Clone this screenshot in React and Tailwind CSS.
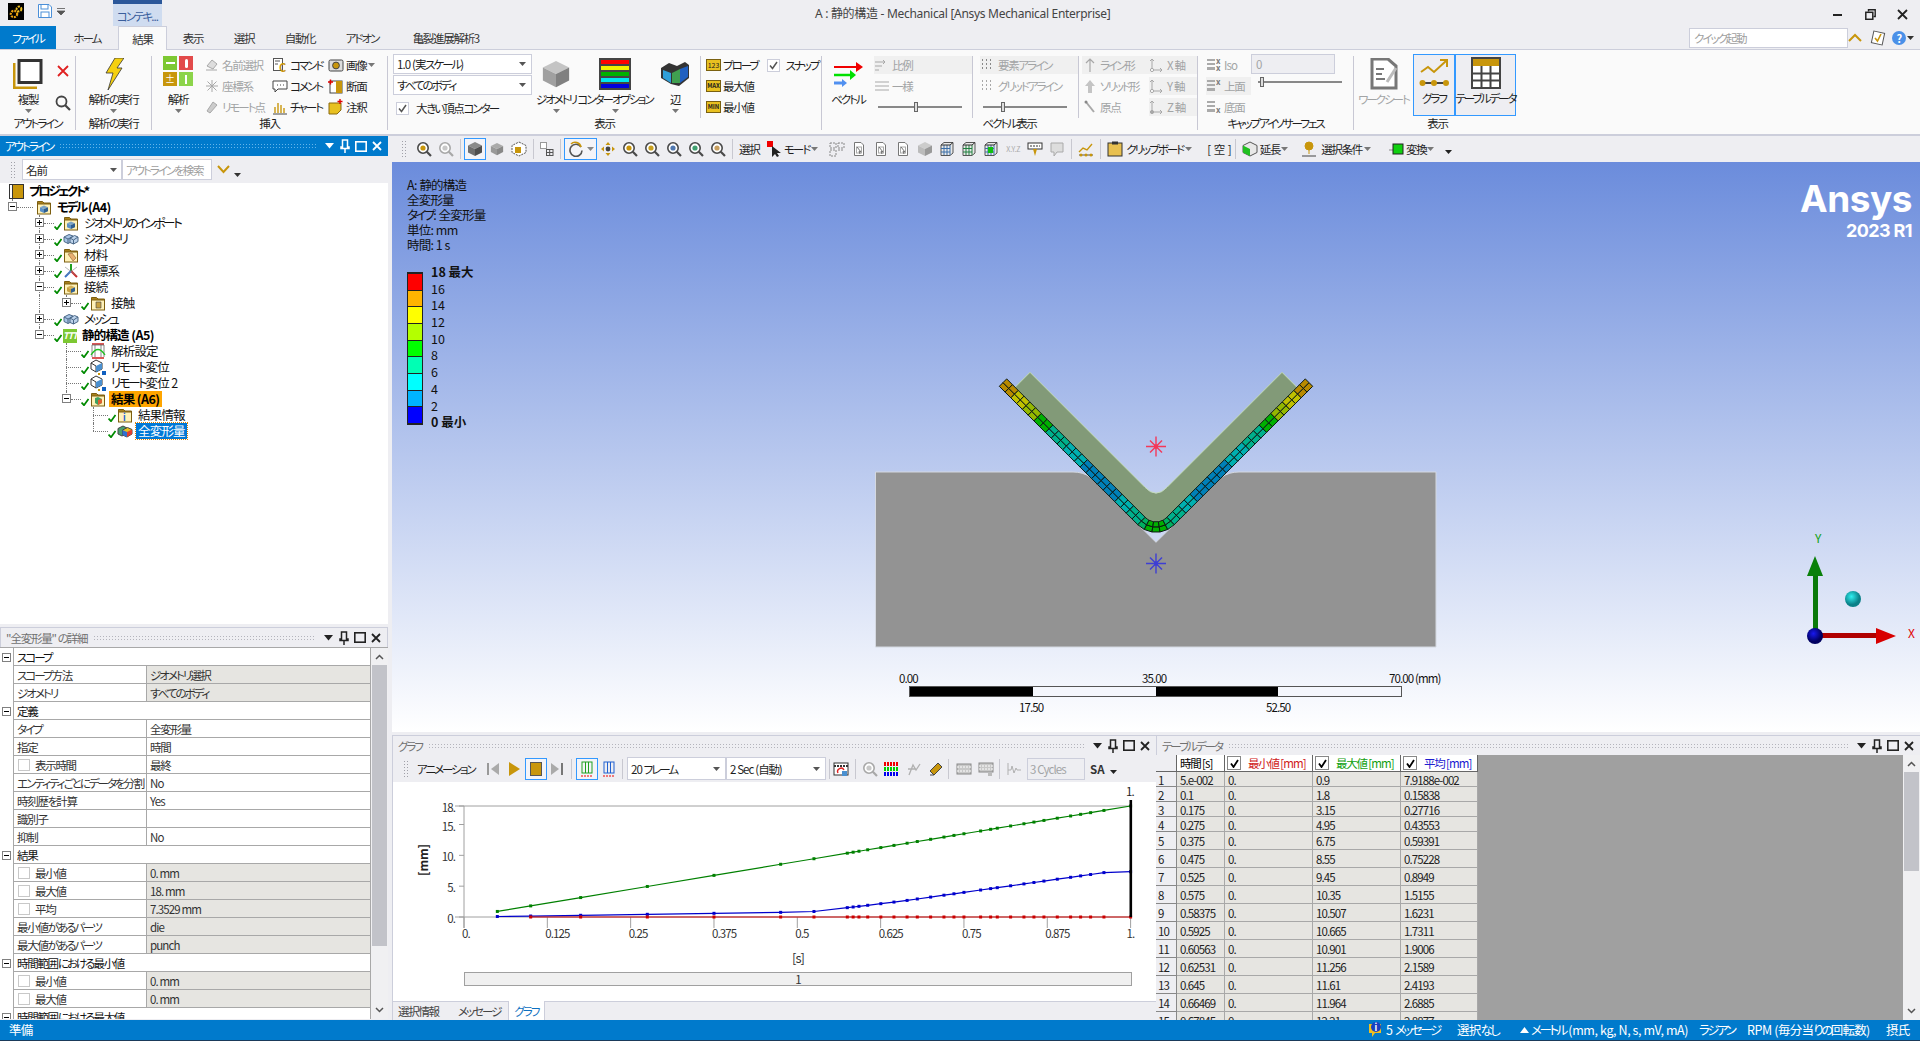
import React from 'react';

const GOLD = '#c8960c';

// Meiryo UI runs much narrower than Noto Sans CJK, so kana and kanji get their own tracking
const K = ({ children, big }) => {
  if (typeof children !== 'string') return children;
  return children.split(/([ぁ-んァ-ヶー]+|[一-龥]+)/).map((s, i) => {
    if (!s) return null;
    if (/[ぁ-んァ-ヶー]/.test(s[0])) return <span key={i} className={big ? 'tracking-[-2.4px]' : 'tracking-[-2px]'}>{s}</span>;
    if (/[一-龥]/.test(s[0])) return <span key={i} className={big ? 'tracking-[-0.8px]' : 'tracking-[-1.3px]'}>{s}</span>;
    return <span key={i}>{s}</span>;
  });
};

const Svg = ({ w = 16, h = 16, vb, children, className = '' }) => (
  <svg width={w} height={h} viewBox={vb || `0 0 ${w} ${h}`} className={`shrink-0 tracking-normal ${className}`}>{children}</svg>
);

// ---------- small icons ----------
const Mag = ({ c = GOLD, dim }) => (
  <Svg>
    <circle cx="7" cy="7" r="5.2" fill="#fff" stroke={dim ? '#a8a8a8' : '#4a4a4a'} strokeWidth="1.6" />
    <circle cx="7" cy="7" r="2.6" fill={dim ? '#c8c8c8' : c} />
    <path d="M10.8 10.8L15 15" stroke={dim ? '#a8a8a8' : '#4a4a4a'} strokeWidth="2.2" />
  </Svg>
);
const Cube = ({ top = '#8a8a8a', left = '#6e6e6e', right = '#4e4e4e', size = 16 }) => (
  <Svg w={size} h={size} vb="0 0 16 16">
    <path d="M8 1L15 4.5L8 8L1 4.5Z" fill={top} />
    <path d="M1 4.5L8 8V15L1 11.5Z" fill={left} />
    <path d="M15 4.5L8 8V15L15 11.5Z" fill={right} />
  </Svg>
);
const Page = ({ mark = '#707070' }) => (
  <Svg>
    <path d="M3.5 1.5H10L12.5 4V14.5H3.5Z" fill="#fff" stroke="#777" />
    <rect x="5.5" y="6" width="5" height="6" fill="none" stroke="#aaa" />
    <path d="M6 6L10 11L8 10.5L9 13" stroke={mark} fill="none" />
  </Svg>
);
const GridBox = ({ c = '#3a6ea8', dot }) => (
  <Svg>
    <path d="M2 4L5 1.5H14V12L11 14.5H2Z" fill="#e8e8e8" stroke="#555" />
    <path d="M5 4V14M8 4V14M2 7.5H11M2 11H11M11 4V14" stroke={c} strokeWidth="1" />
    <path d="M2 4H11L14 1.5" stroke="#333" fill="none" />
    {dot && <rect x="5" y="6" width="5" height="6" fill={dot} />}
  </Svg>
);
const Chevron = ({ c = GOLD }) => (
  <Svg w={14} h={10}><path d="M1 8L7 2L13 8" fill="none" stroke={c} strokeWidth="2" /></Svg>
);
const Tri = ({ c = '#555', className = '' }) => (
  <Svg w={7} h={4} className={className}><path d="M0 0H7L3.5 4Z" fill={c} /></Svg>
);
const Check = () => (
  <Svg w={8} h={8} className="mt-[6px]"><path d="M0.5 4.5L3 7.2L7.5 1" fill="none" stroke="#008a00" strokeWidth="1.8" /></Svg>
);
const Folder = ({ children }) => (
  <Svg>
    <path d="M1.5 2.5H6.5L8 4H14.5V6H1.5Z" fill="#a8801c" stroke="#7c5e10" />
    <rect x="1.5" y="5" width="13" height="10" fill="#fff1b8" stroke="#7c5e10" />
    {children}
  </Svg>
);
const MiniCube = ({ c = '#5a90c8' }) => (
  <g>
    <path d="M8 6.5L12 8.3L8 10L4 8.3Z" fill={c} opacity="0.8" />
    <path d="M4 8.3L8 10V14L4 12.2Z" fill={c} />
    <path d="M12 8.3L8 10V14L12 12.2Z" fill="#2e5e90" />
  </g>
);
const BlueBoxes = () => (
  <Svg>
    <path d="M1 6L6 3.5L10 5V10L5 12.5L1 10.5Z" fill="#a8c4e4" stroke="#4a6888" />
    <path d="M7 7L11.5 4.5L15 6V10.5L10.5 13L7 11.5Z" fill="#bcd2ea" stroke="#4a6888" />
    <path d="M1 6L5 8V12.5M5 8L10 5.5M7 7L10.5 9V13M10.5 9L15 6" stroke="#4a6888" fill="none" />
  </Svg>
);
const Multi = () => (
  <Svg>
    <path d="M1 5.5L6 3L10 5V10.5L5 13L1 11Z" fill="#48a070" stroke="#444" />
    <path d="M5.5 7L10.5 4.5L15 6.5V11L10 14L5.5 12Z" fill="#e8c020" stroke="#444" />
    <path d="M5.5 7L10 9V14L5.5 12Z" fill="#3070d0" />
    <path d="M10 9L15 6.5V11L10 14Z" fill="#e04030" />
  </Svg>
);

// ---------- panels ----------
const Dots = ({ light }) => (
  <div className={`flex-1 h-[6px] mx-[6px] bg-[length:3px_3px] ${light ? 'bg-[radial-gradient(#b4b4bc_0.7px,transparent_0.8px)]' : 'bg-[radial-gradient(#63b4ea_0.7px,transparent_0.8px)]'}`} />
);
const PanelHead = ({ title, active, className = '' }) => {
  const c = active ? '#ffffff' : '#222222';
  return (
    <div className={`h-[20px] flex items-center shrink-0 pl-[5px] pr-[6px] ${active ? 'bg-[#007acc] text-white' : 'bg-[#eeeef2] text-[#717171]'} ${className}`}>
      <span className="whitespace-nowrap"><K>{title}</K></span>
      <Dots light={!active} />
      <Svg w={9} h={6} className="ml-[3px]"><path d="M0 0H9L4.5 5.5Z" fill={c} /></Svg>
      <Svg w={10} h={14} className="ml-[6px]"><path d="M2.5 1H7.5V8H9V9.5H1V8H2.5ZM5 9.5V14" fill="none" stroke={c} strokeWidth="1.5" /></Svg>
      <Svg w={12} h={11} className="ml-[5px]"><rect x="0.8" y="0.8" width="10.4" height="9.4" fill="none" stroke={c} strokeWidth="1.6" /></Svg>
      <Svg w={10} h={10} className="ml-[5px]"><path d="M1 1L9 9M9 1L1 9" stroke={c} strokeWidth="1.8" /></Svg>
    </div>
  );
};
const Grip = ({ className = '' }) => (
  <div className={`w-[5px] h-[18px] shrink-0 bg-[length:3px_3px] bg-[radial-gradient(#a0a0a8_0.7px,transparent_0.8px)] ${className}`} />
);

// ---------- title bar + tabs ----------
const TitleBar = () => (
  <div className="h-[26px] flex items-stretch relative shrink-0">
    <div className="ml-[8px] mt-[3px] w-[16px] h-[17px] bg-black flex items-center justify-center">
      <Svg w={14} h={14}>
        <circle cx="5" cy="9" r="3.2" fill="none" stroke="#e8a010" strokeWidth="2.2" strokeDasharray="2 1" />
        <circle cx="10" cy="4" r="2.4" fill="none" stroke="#f0c020" strokeWidth="2" strokeDasharray="2 1" />
      </Svg>
    </div>
    <div className="ml-[14px] mt-[4px]">
      <Svg w={14} h={14}>
        <path d="M0.5 0.5H11L13.5 3V13.5H0.5Z" fill="#fff" stroke="#4b8fd8" />
        <rect x="3" y="0.5" width="7" height="4.5" fill="none" stroke="#4b8fd8" />
        <rect x="3" y="8" width="8" height="5.5" fill="none" stroke="#4b8fd8" />
      </Svg>
    </div>
    <div className="ml-[5px] mt-[8px]">
      <Svg w={8} h={8}><path d="M0 0.5H8M0 3H8L4 7Z" stroke="#555" fill="#555" strokeWidth="0.8" /></Svg>
    </div>
    <div className="ml-[48px] w-[49px] bg-[#cfdcf0] border-t-[4px] border-[#2b579a] text-[#3a5e9c] text-center pt-[5px] whitespace-nowrap"><K>コンテキ...</K></div>
    <div className="absolute left-[815px] top-[6px] text-[#444] text-[12px] whitespace-nowrap font-['Noto_Sans','Noto_Sans_CJK_JP',sans-serif] leading-[16px] tracking-[-0.3px]">A : 静的構造 - Mechanical [Ansys Mechanical Enterprise]</div>
    <div className="ml-auto flex items-center pt-[3px] pr-[12px] gap-[21px]">
      <div className="w-[9px] h-[2px] bg-[#222] mr-[2px]" />
      <Svg w={11} h={11}><path d="M3.5 2.5V0.8H10.2V7.5H8.5" fill="none" stroke="#222" strokeWidth="1.4" /><rect x="0.8" y="3.3" width="7" height="7" fill="none" stroke="#222" strokeWidth="1.5" /></Svg>
      <Svg w={11} h={11}><path d="M1 1L10 10M10 1L1 10" stroke="#222" strokeWidth="1.8" /></Svg>
    </div>
  </div>
);

const tabs = [
  ['ホーム', 'w-[62px]'],
  ['結果', 'w-[49px]'],
  ['表示', 'w-[52px]'],
  ['選択', 'w-[50px]'],
  ['自動化', 'w-[62px]'],
  ['アドオン', 'w-[62px]'],
  ['亀裂進展解析3', 'w-[106px]'],
];
const TabRow = () => (
  <div className="h-[24px] flex items-stretch border-b border-[#cccedb] shrink-0">
    <div className="w-[56px] bg-[#007acc] text-white flex items-center justify-center"><span><K>ファイル</K></span></div>
    {tabs.map(([t, w]) => (
      <div key={t} className={`${w} flex items-center justify-center text-[#333] ${t === '結果' ? 'bg-[#fafafa] border border-b-0 border-[#cccedb] h-[24px]' : ''}`}><span><K>{t}</K></span></div>
    ))}
    <div className="ml-auto flex items-center pr-[6px]">
      <div className="w-[159px] h-[20px] bg-white border border-[#cccedb] pl-[4px] flex items-center text-[#a0a0a0]"><span><K>クイック起動</K></span></div>
      <Chevron />
      <div className="ml-[8px]">
        <Svg><rect x="2.5" y="2" width="11" height="12" fill="#fff" stroke="#555" transform="rotate(12 8 8)" /><path d="M5 8L7.5 11L11 4" fill="none" stroke={GOLD} strokeWidth="1.6" /></Svg>
      </div>
      <div className="ml-[6px] w-[14px] h-[14px] rounded-full bg-[#4a90e8] text-white font-bold text-[11px] flex items-center justify-center">?</div>
      <Tri c="#333" className="ml-[1px]" />
    </div>
  </div>
);

// ---------- ribbon ----------
const Sep = ({ short }) => <div className={`w-px bg-[#c8c8d4] shrink-0 ${short ? 'h-[62px]' : 'h-[74px]'}`} />;
const Group = ({ w, label, children, end = true }) => (
  <>
    <div className={`${w} h-[74px] flex flex-col shrink-0`}>
      <div className="h-[60px] flex">{children}</div>
      <div className="h-[14px] leading-[14px] text-center text-[#1e1e1e] whitespace-nowrap"><K>{label}</K></div>
    </div>
    {end && <Sep />}
  </>
);
const Big = ({ w, icon, label, arrow = true, dis, box }) => (
  <div className={`${w} shrink-0 flex flex-col items-center ${box ? 'border border-[#3399ff] bg-[#eeeef2] h-[62px] -mt-[2px]' : ''}`}>
    <div className="h-[36px] flex items-center justify-center">{icon}</div>
    <div className={`h-[14px] leading-[14px] whitespace-nowrap ${dis ? 'text-[#a2a4a5]' : 'text-[#1e1e1e]'}`}><K>{label}</K></div>
    {arrow && <div className="h-[10px] flex items-center"><Tri c="#777" /></div>}
  </div>
);
const Small = ({ icon, label, dis, bg }) => (
  <div className={`h-[18px] flex items-center gap-[2px] whitespace-nowrap ${dis ? 'text-[#a2a4a5]' : 'text-[#1e1e1e]'} ${bg ? 'bg-[#f0f0f0]' : ''}`}>
    {icon}
    <span><K>{label}</K></span>
  </div>
);
const Col = ({ w, className = '', children }) => (
  <div className={`${w} shrink-0 flex flex-col gap-[3px] ${className}`}>{children}</div>
);
const Slider = ({ w, pos }) => (
  <div className={`${w} h-[10px] relative`}>
    <div className="absolute inset-x-0 top-[4px] h-[2px] bg-[#888]" />
    <div className={`absolute ${pos} top-0 w-[4px] h-[10px] bg-[#ddd] border border-[#666]`} />
  </div>
);
const Check16 = ({ on = true }) => (
  <div className="w-[13px] h-[13px] border border-[#cccedb] bg-white flex items-center justify-center shrink-0">
    {on && <Svg w={9} h={9}><path d="M1 4.5L3.5 7.5L8 1" fill="none" stroke="#555" strokeWidth="1.5" /></Svg>}
  </div>
);
const Select = ({ w, text, className = '' }) => (
  <div className={`${w} h-[20px] bg-white border border-[#cccedb] flex items-center pl-[3px] pr-[5px] text-[#1e1e1e] whitespace-nowrap ${className}`}>
    <span className="flex-1"><K>{text}</K></span>
    <Tri c="#555" />
  </div>
);
const dimLine = '#a8a8a8';
const Ax = ({ o }) => (
  <Svg>
    <path d="M3 13V2M1 4L3 2L5 4M3 13H13M11 11L13 13L11 15" fill="none" stroke={dimLine} />
    <circle cx="3" cy="13" r="1.6" fill={o ? dimLine : '#fff'} stroke={dimLine} />
  </Svg>
);
const Capicon = ({ l = 'x' }) => (
  <Svg>
    <rect x="1" y="2" width="8" height="2" fill="#aaa" /><rect x="1" y="6" width="8" height="2" fill="#aaa" /><rect x="1" y="10" width="8" height="3" fill="#aaa" />
    <text x="10" y={l === 'b' ? 14 : 7} fontSize="8" fontWeight="bold" fill="#777">x</text>
    {l === 'x' && <text x="10" y="14" fontSize="8" fontWeight="bold" fill="#777">x</text>}
  </Svg>
);

const Ribbon = () => (
  <div className="h-[86px] bg-[#fafafa] border-b-2 border-[#cccedb] flex pt-[6px] shrink-0">
    <Group w="w-[75px]" label="アウトライン">
      <Big w="w-[56px]" label="複製" icon={
        <Svg w={30} h={30}>
          <path d="M1 4V29H24" fill="none" stroke={GOLD} strokeWidth="3" />
          <rect x="6" y="1.5" width="22" height="22" fill="#fff" stroke="#333" strokeWidth="3" />
        </Svg>} />
      <div className="w-[14px] flex flex-col items-center pt-[9px] gap-[18px]">
        <Svg w={12} h={12}><path d="M1 1L11 11M11 1L1 11" stroke="#e02020" strokeWidth="1.8" /></Svg>
        <Svg><circle cx="6.5" cy="6.5" r="5" fill="none" stroke="#444" strokeWidth="1.8" /><path d="M10 10L15 15" stroke="#444" strokeWidth="2.2" /></Svg>
      </div>
    </Group>
    <Group w="w-[75px]" label="解析の実行">
      <Big w="w-[75px]" label="解析の実行" icon={
        <Svg w={20} h={32}><path d="M11 0H20L13 10H18L4 32L9 15H2Z" fill="#f5d010" stroke="#333" strokeWidth="0.8" /></Svg>} />
    </Group>
    <Group w="w-[235px]" label="挿入">
      <Big w="w-[52px]" label="解析" icon={
        <div className="grid grid-cols-2 gap-[2px] w-[30px] -mt-[6px]">
          <div className="h-[14px] bg-[#7dc832] flex items-center justify-center"><div className="w-[9px] h-[3px] border-t-2 border-white" /></div>
          <div className="h-[14px] bg-[#e24a4a] flex items-center justify-center"><div className="w-[3px] h-[9px] bg-white rounded-full" /></div>
          <div className="h-[14px] bg-[#c8960c] flex items-center justify-center text-white text-[10px] tracking-normal">±</div>
          <div className="h-[14px] bg-[#8cd44a] flex items-center justify-center"><div className="w-[2px] h-[9px] bg-white" /></div>
        </div>} />
      <Col w="w-[68px]">
        <Small dis label="名前選択" icon={<Svg><path d="M2 13H13M3 9L8 3L13 7L9 12Z" fill="#ddd" stroke={dimLine} /></Svg>} />
        <Small dis label="座標系" icon={<Svg><path d="M8 2V14M2 8H14M3.5 3.5L12.5 12.5M12.5 3.5L3.5 12.5" stroke={dimLine} /></Svg>} />
        <Small dis label="リモート点" icon={<Svg><path d="M3 12L9 3L13 6L6 14Z" fill="#ccc" stroke={dimLine} /></Svg>} />
      </Col>
      <Col w="w-[56px]">
        <Small label="コマンド" icon={<Svg><rect x="1.5" y="1.5" width="9" height="12" fill="#fff" stroke="#555" /><path d="M3 4H8M3 7H6" stroke="#555" /><text x="7" y="15" fontSize="11" fontWeight="bold" fill={GOLD}>C</text></Svg>} />
        <Small label="コメント" icon={<Svg><path d="M1 3H15V11H6L3 14V11H1Z" fill="#fff" stroke="#444" /><path d="M5 7H6M8 7H9M11 7H12" stroke="#444" /></Svg>} />
        <Small label="チャート" icon={<Svg><path d="M1 15H15" stroke="#444" /><path d="M3 14V8M6 14V4M9 14V6M12 14V9" stroke={GOLD} strokeWidth="1.4" /></Svg>} />
      </Col>
      <Col w="w-[58px]">
        <div className="flex items-center gap-[2px]"><Small label="画像" icon={<Svg><rect x="1" y="3" width="14" height="11" rx="1.5" fill="#ddd" stroke="#444" /><circle cx="8" cy="8.5" r="3.4" fill={GOLD} stroke="#444" /></Svg>} /><Tri c="#777" /></div>
        <Small label="断面" icon={<Svg><rect x="2" y="3" width="12" height="12" fill="#fff" stroke="#444" /><rect x="8" y="3" width="6" height="12" fill={GOLD} /><path d="M0 4H5M2.5 1.5V6.5" stroke="#e00000" strokeWidth="1.4" /></Svg>} />
        <Small label="注釈" icon={<Svg><path d="M1 4H13V11L9 15H1Z" fill="#e8c020" stroke="#8a6a10" /><path d="M12 0V5M9.5 2.5H14.5" stroke="#e00000" strokeWidth="1.4" /></Svg>} />
      </Col>
    </Group>
    <Group w="w-[433px]" label="表示">
      <div className="w-[144px] pl-[5px] shrink-0 flex flex-col -mt-[2px]">
        <Select w="w-[139px]" text="1.0 (実スケール)" />
        <Select w="w-[139px]" text="すべてのボディ" className="mt-[1px]" />
        <div className="h-[16px] mt-[5px] flex items-center gap-[7px] pl-[3px] text-[#1e1e1e] whitespace-nowrap"><Check16 /><span><K>大きい頂点コンター</K></span></div>
      </div>
      <Big w="w-[48px]" label="ジオメトリ" icon={<Cube size={30} top="#c4c4c4" left="#a0a0a0" right="#808080" />} />
      <Big w="w-[70px]" label="コンターオプション" icon={
        <div className="w-[32px] h-[32px] bg-[#444] flex flex-col gap-[1.5px] p-[2px]">
          <div className="flex-1 bg-[#ff0000]" /><div className="flex-1 bg-[#f0f000]" /><div className="flex-1 bg-[#00b000]" /><div className="flex-1 bg-[#00e8f0]" /><div className="flex-1 bg-[#0000e0]" />
        </div>} />
      <div className="w-[50px] shrink-0"><Big w="w-[50px]" label="辺" icon={
        <Svg w={30} h={26}>
          <path d="M1 7L9 2L17 5L25 1L29 4V17L19 25L11 23L1 17Z" fill="#333" />
          <path d="M3 9L11 12V22L3 17Z" fill="#2f9fd8" /><path d="M12 12L20 8V22L12 22Z" fill="#40a050" /><path d="M20 8L28 5V16L20 22Z" fill="#2060c0" />
        </Svg>} /></div>
      <Sep short />
      <div className="w-[119px] pl-[5px] shrink-0 flex flex-col gap-[3px]">
        <div className="flex items-center"><Small label="プローブ" icon={<div className="w-[15px] h-[12px] bg-[#e8c020] border border-[#7a6010] text-[7px] tracking-normal flex items-center justify-center">123</div>} />
          <div className="ml-[9px] flex items-center gap-[6px] text-[#1e1e1e] whitespace-nowrap"><Check16 /><span><K>スナップ</K></span></div></div>
        <Small label="最大値" icon={<div className="w-[15px] h-[12px] bg-[#e8c020] border border-[#7a6010] text-[6px] tracking-normal font-bold flex items-center justify-center">MAX</div>} />
        <Small label="最小値" icon={<div className="w-[15px] h-[12px] bg-[#e8c020] border border-[#7a6010] text-[6px] tracking-normal font-bold flex items-center justify-center">MIN</div>} />
      </div>
    </Group>
    <Group w="w-[375px]" label="ベクトル表示">
      <div className="w-[52px] shrink-0"><Big w="w-[52px]" arrow={false} label="ベクトル" icon={
        <Svg w={30} h={26}>
          <path d="M1 6H24" stroke="#f00000" strokeWidth="2" /><path d="M23 1L30 6L23 11Z" fill="#f00000" />
          <path d="M1 14H18" stroke="#00e000" strokeWidth="2.5" /><path d="M17 9L23 14L17 19Z" fill="#00e000" />
          <path d="M1 22H10" stroke="#5090f0" strokeWidth="3" /><path d="M9 18L14 22L9 26Z" fill="#5090f0" />
        </Svg>} /></div>
      <Col w="w-[98px]">
        <Small dis bg label="比例" icon={<Svg><path d="M1 5H11M1 9H8M1 13H5M9 3L11 5L9 7" fill="none" stroke={dimLine} /></Svg>} />
        <Small dis label="一様" icon={<Svg><path d="M1 4H15M1 8H15M1 12H15" stroke={dimLine} /></Svg>} />
        <div className="h-[18px] flex items-center pl-[4px]"><Slider w="w-[84px]" pos="left-[36px]" /></div>
      </Col>
      <Sep short />
      <Col w="w-[105px]" className="pl-[7px]">
        <Small dis bg label="要素アライン" icon={<Svg><path d="M2 3H3M6 3H7M10 3H11M2 7H3M6 7H7M10 7H11M2 11H3M6 11H7M10 11H11" stroke="#888" strokeWidth="2" /></Svg>} />
        <Small dis label="グリッドアライン" icon={<Svg><path d="M2 3H3M6 3H7M10 3H11M2 7H3M6 7H7M10 7H11M2 11H3M6 11H7M10 11H11" stroke={dimLine} strokeWidth="2" /></Svg>} />
        <div className="h-[18px] flex items-center pl-[3px]"><Slider w="w-[84px]" pos="left-[18px]" /></div>
      </Col>
      <Sep short />
      <Col w="w-[70px]" className="pl-[3px]">
        <Small dis bg label="ライン形" icon={<Svg><path d="M8 15V2M4 6L8 2L12 6" fill="none" stroke={dimLine} strokeWidth="1.2" /></Svg>} />
        <Small dis label="ソリッド形" icon={<Svg><path d="M6 15V8H3L8 2L13 8H10V15Z" fill="#c4c4c4" /></Svg>} />
        <Small dis label="原点" icon={<Svg><path d="M4 3L12 13" stroke={dimLine} strokeWidth="2" /><circle cx="4" cy="3" r="1.5" fill="#888" /></Svg>} />
      </Col>
      <Col w="w-[48px]">
        <Small dis bg label="X 軸" icon={<Ax />} />
        <Small dis bg label="Y 軸" icon={<Ax />} />
        <Small dis bg label="Z 軸" icon={<Ax o />} />
      </Col>
    </Group>
    <Group w="w-[155px]" label="キャップアイソサーフェス">
      <Col w="w-[53px]" className="pl-[8px]">
        <Small dis label="Iso" icon={<Capicon />} />
        <Small dis bg label="上面" icon={<Capicon l="t" />} />
        <Small dis label="底面" icon={<Capicon l="b" />} />
      </Col>
      <div className="flex flex-col -mt-[2px]">
        <div className="w-[84px] h-[20px] bg-[#eeeef2] border border-[#cccedb] text-[#a2a4a5] pl-[4px] flex items-center">0</div>
        <div className="pl-[7px] mt-[3px]"><Slider w="w-[84px]" pos="left-[2px]" /></div>
      </div>
    </Group>
    <Group w="w-[167px]" label="表示" end={false}>
      <Big w="w-[59px]" arrow={false} dis label="ワークシート" icon={
        <Svg w={28} h={32}>
          <path d="M2 1H18L26 8V30H2Z" fill="#fff" stroke="#777" strokeWidth="3" />
          <path d="M6 11H14M6 16H12M6 21H15" stroke="#777" strokeWidth="2" /><path d="M26 10L17 24" stroke="#bbb" strokeWidth="3" />
        </Svg>} />
      <Big w="w-[42px]" box arrow={false} label="グラフ" icon={
        <Svg w={30} h={30}>
          <path d="M2 14L9 9L15 14L27 3M21 2H28V9" fill="none" stroke={GOLD} strokeWidth="2" />
          <path d="M3 25H27" stroke="#444" strokeWidth="2" />
          <circle cx="3.5" cy="25" r="3" fill={GOLD} /><circle cx="15" cy="25" r="3" fill={GOLD} /><circle cx="27" cy="25" r="3" fill={GOLD} />
        </Svg>} />
      <Big w="w-[61px]" box arrow={false} label="テーブルデータ" icon={
        <Svg w={30} h={32}>
          <rect x="1" y="1" width="28" height="30" fill="#fff" stroke="#444" strokeWidth="2" />
          <rect x="2" y="2" width="26" height="7" fill={GOLD} />
          <path d="M10.5 9V30M19.5 9V30M2 16.5H28M2 23.5H28" stroke="#444" strokeWidth="2" />
        </Svg>} />
    </Group>
  </div>
);

// ---------- outline tree ----------
const left = { 0: 'pl-[9px]', 1: 'pl-[36px]', 2: 'pl-[54px]', 3: 'pl-[81px]', 4: 'pl-[108px]' };
const Expander = ({ open, pos }) => (
  <div className={`absolute ${pos} top-[3px] w-[9px] h-[9px] border border-[#808080] bg-white flex items-center justify-center`}>
    <div className="w-[5px] h-px bg-black" />
    {!open && <div className="absolute w-px h-[5px] bg-black" />}
  </div>
);
const treeRows = [
  { lvl: 0, text: 'プロジェクト*', bold: true, icon: <Svg w={15} h={15}><rect x="0.5" y="0.5" width="14" height="14" fill={GOLD} stroke="#333" /><rect x="0.5" y="0.5" width="3" height="14" fill="#fff" stroke="#333" /></Svg>, v: [['left-[12px]', 'top-[10px] h-[6px]']] },
  { lvl: 1, text: 'モデル (A4)', bold: true, icon: <Folder><MiniCube /></Folder>, exp: ['left-[8px]', true], h: ['left-[17px]', 'w-[16px]'], v: [['left-[12px]', 'top-0 h-[4px]'], ['left-[39px]', 'top-[12px] h-[4px]']] },
  { lvl: 2, text: 'ジオメトリのインポート', icon: <Folder><MiniCube /></Folder>, exp: ['left-[35px]'], h: ['left-[44px]', 'w-[10px]'], v: [['left-[39px]', 'top-0 h-full']] },
  { lvl: 2, text: 'ジオメトリ', icon: <BlueBoxes />, exp: ['left-[35px]'], h: ['left-[44px]', 'w-[10px]'], v: [['left-[39px]', 'top-0 h-full']] },
  { lvl: 2, text: '材料', icon: <Folder><path d="M5 7L9 6L13 11L10 14Z" fill="#e8b070" stroke="#906030" strokeWidth="0.6" /></Folder>, exp: ['left-[35px]'], h: ['left-[44px]', 'w-[10px]'], v: [['left-[39px]', 'top-0 h-full']] },
  { lvl: 2, text: '座標系', icon: <Svg><path d="M8 8V1" stroke="#20a020" strokeWidth="2" /><path d="M8 8L14 14" stroke="#d02020" strokeWidth="2" /><path d="M8 8L2 14" stroke="#3070d0" strokeWidth="2" /><path d="M2 4L14 13M14 4L2 13" stroke="#888" strokeWidth="0.6" /></Svg>, exp: ['left-[35px]'], h: ['left-[44px]', 'w-[10px]'], v: [['left-[39px]', 'top-0 h-full']] },
  { lvl: 2, text: '接続', icon: <Folder><MiniCube c="#c8a040" /></Folder>, exp: ['left-[35px]', true], h: ['left-[44px]', 'w-[10px]'], v: [['left-[39px]', 'top-0 h-full'], ['left-[66px]', 'top-[12px] h-[4px]']] },
  { lvl: 3, text: '接触', icon: <Folder><path d="M6 7H11V13H6Z" fill="#c8a040" stroke="#444" strokeWidth="0.6" /></Folder>, exp: ['left-[62px]'], h: ['left-[71px]', 'w-[10px]'], v: [['left-[39px]', 'top-0 h-full'], ['left-[66px]', 'top-0 h-[4px]']] },
  { lvl: 2, text: 'メッシュ', icon: <BlueBoxes />, exp: ['left-[35px]'], h: ['left-[44px]', 'w-[10px]'], v: [['left-[39px]', 'top-0 h-full']] },
  { lvl: 2, text: '静的構造 (A5)', bold: true, icon: <div className="w-[14px] h-[14px] bg-[#7dc832] text-white text-[9px] italic font-bold flex items-center justify-center mt-[1px]">TTT</div>, exp: ['left-[35px]', true], h: ['left-[44px]', 'w-[10px]'], v: [['left-[39px]', 'top-0 h-[4px]'], ['left-[66px]', 'top-[12px] h-[4px]']] },
  { lvl: 3, text: '解析設定', icon: <Svg><path d="M2 1H14M2 15H14" stroke="#d02020" strokeWidth="1.4" /><path d="M2 2H14M5 2V14M11 2V14M2 2V14M14 2V14" stroke="#555" strokeWidth="0.7" /><path d="M1 12Q8 1 15 12" fill="none" stroke="#20c020" strokeWidth="1.3" /></Svg>, h: ['left-[66px]', 'w-[15px]'], v: [['left-[66px]', 'top-0 h-full']] },
  { lvl: 3, text: 'リモート変位', icon: <Svg><Cubelet /></Svg>, h: ['left-[66px]', 'w-[15px]'], v: [['left-[66px]', 'top-0 h-full']] },
  { lvl: 3, text: 'リモート変位 2', icon: <Svg><Cubelet /></Svg>, h: ['left-[66px]', 'w-[15px]'], v: [['left-[66px]', 'top-0 h-full']] },
  { lvl: 3, text: '結果 (A6)', bold: true, hl: true, icon: <Folder><path d="M5 7L8 6L12 8V12L8 14L5 12Z" fill="#40a060" /><path d="M8 9L12 8V12L8 14Z" fill="#e06030" /></Folder>, exp: ['left-[62px]', true], h: ['left-[71px]', 'w-[10px]'], v: [['left-[66px]', 'top-0 h-[4px]'], ['left-[93px]', 'top-[12px] h-[4px]']] },
  { lvl: 4, text: '結果情報', icon: <Folder><text x="6" y="14" fontSize="9" fontWeight="bold" fill="#2060d0">i</text></Folder>, h: ['left-[93px]', 'w-[15px]'], v: [['left-[93px]', 'top-0 h-full']] },
  { lvl: 4, text: '全変形量', sel: true, icon: <Multi />, h: ['left-[93px]', 'w-[15px]'], v: [['left-[93px]', 'top-0 h-[8px]']] },
];
function Cubelet() {
  return (
    <g>
      <path d="M6 1L12 4V10L6 13L1 10V4Z" fill="#fff" stroke="#333" />
      <path d="M1 4L6 7V13" fill="none" stroke="#333" />
      <path d="M6 7L12 4V10L6 13Z" fill="#4a90d0" />
      <rect x="12" y="12" width="4" height="4" fill="#1060c0" />
      <rect x="8" y="14" width="2" height="2" fill={GOLD} />
    </g>
  );
}
const TreeRow = ({ r }) => (
  <div className={`relative h-[16px] flex items-center ${left[r.lvl]}`}>
    {r.v && r.v.map(([l, rest]) => <div key={l} className={`absolute ${l} ${rest} border-l border-dotted border-[#777]`} />)}
    {r.h && <div className={`absolute ${r.h[0]} ${r.h[1]} top-[8px] border-t border-dotted border-[#777]`} />}
    {r.exp && <Expander pos={r.exp[0]} open={r.exp[1]} />}
    {r.lvl >= 2 && <Check />}
    {r.lvl >= 2 && <div className="w-px" />}
    <div className="relative bg-white flex">{r.icon}</div>
    <span className={`ml-[3px] whitespace-nowrap px-[2px] leading-[16px] text-[12.5px] tracking-[-0.5px] ${r.bold ? 'font-bold text-black' : 'text-[#111]'} ${r.hl ? 'bg-[#ffa500]' : ''} ${r.sel ? 'bg-[#0078d7] !text-white outline-1 outline-dotted outline-[#e08000]' : ''}`}><K big>{r.text}</K></span>
  </div>
);

const Outline = () => (
  <div className="h-[488px] flex flex-col">
    <PanelHead active title="アウトライン" />
    <div className="h-[27px] bg-[#eeeef2] flex items-center shrink-0">
      <Grip className="ml-[10px]" />
      <div className="ml-[7px] w-[100px] h-[21px] bg-white border border-[#cccedb] flex items-center pl-[3px] pr-[4px] text-[#1e1e1e]"><span className="flex-1">名前</span><Tri /></div>
      <div className="w-[90px] h-[21px] bg-white border border-[#cccedb] flex items-center pl-[3px] text-[#a0a0a0] whitespace-nowrap overflow-hidden"><span><K>アウトラインを検索</K></span></div>
      <Svg w={13} h={9} className="ml-[5px]"><path d="M1 1L6.5 7L12 1" fill="none" stroke={GOLD} strokeWidth="2" /></Svg>
      <Tri c="#333" className="ml-[4px] mt-[10px]" />
    </div>
    <div className="flex-1 bg-white">
      {treeRows.map((r, i) => <TreeRow key={i} r={r} />)}
    </div>
  </div>
);

// ---------- details ----------
const details = [
  { s: 'スコープ' },
  { k: 'スコープ方法', v: 'ジオメトリ選択', g: true },
  { k: 'ジオメトリ', v: 'すべてのボディ', g: true },
  { s: '定義' },
  { k: 'タイプ', v: '全変形量' },
  { k: '指定', v: '時間' },
  { k: '表示時間', v: '最終', c: true },
  { k: 'エンティティごとにデータを分割', v: 'No' },
  { k: '時刻歴を計算', v: 'Yes' },
  { k: '識別子', v: '' },
  { k: '抑制', v: 'No' },
  { s: '結果' },
  { k: '最小値', v: '0. mm', c: true, g: true },
  { k: '最大値', v: '18. mm', c: true, g: true },
  { k: '平均', v: '7.3529 mm', c: true, g: true },
  { k: '最小値があるパーツ', v: 'die', g: true },
  { k: '最大値があるパーツ', v: 'punch', g: true },
  { s: '時間範囲における最小値' },
  { k: '最小値', v: '0. mm', c: true, g: true },
  { k: '最大値', v: '0. mm', c: true, g: true },
  { s: '時間範囲における最大値' },
];
const DetailRow = ({ d }) => (
  <div className="h-[18px] flex items-stretch shrink-0">
    <div className="w-[13px] shrink-0 flex items-center pl-[2px]">
      {d.s && <div className="w-[9px] h-[9px] border border-[#808080] flex items-center justify-center"><div className="w-[5px] h-px bg-black" /></div>}
    </div>
    {d.s ? (
      <div className="w-[358px] bg-white border-b border-r border-l border-[#a8a8a8] pl-[3px] flex items-center text-[#111] whitespace-nowrap"><span><K>{d.s}</K></span></div>
    ) : (
      <>
        <div className="w-[133px] bg-white border-b border-l border-[#a8a8a8] pl-[3px] flex items-center gap-[5px] text-[#333] whitespace-nowrap">
          {d.c && <div className="w-[12px] h-[12px] border border-[#c8c8c8] shrink-0 ml-px" />}
          <span><K>{d.k}</K></span>
        </div>
        <div className={`w-[225px] border-b border-l border-r border-[#a8a8a8] pl-[3px] flex items-center text-[#333] ${d.g ? 'bg-[#e6e5e1]' : 'bg-white'}`}><span><K>{d.v}</K></span></div>
      </>
    )}
  </div>
);
const Details = () => (
  <div className="h-[395px] flex flex-col">
    <div className="h-[3px] bg-[#eeeef2] shrink-0" />
    <PanelHead title={'"全変形量" の詳細'} className="border border-[#cccedb] border-b-0 h-[19px]" />
    <div className="flex-1 flex min-h-0 bg-white overflow-hidden border-t border-[#a8a8a8]">
      <div className="w-[371px] flex flex-col overflow-hidden">
        {details.map((d, i) => <DetailRow key={i} d={d} />)}
      </div>
      <div className="w-[17px] bg-[#f0f0f2] flex flex-col items-center">
        <Svg w={9} h={6} className="mt-[6px]"><path d="M1 5L4.5 1.5L8 5" fill="none" stroke="#555" strokeWidth="1.5" /></Svg>
        <div className="w-[15px] h-[281px] bg-[#c2c3c9] mt-[5px]" />
        <div className="flex-1" />
        <Svg w={9} h={6} className="mb-[6px]"><path d="M1 1L4.5 4.5L8 1" fill="none" stroke="#555" strokeWidth="1.5" /></Svg>
      </div>
    </div>
  </div>
);

// ---------- view toolbar ----------
const Tb = ({ children, box, w = 'w-[22px]' }) => (
  <div className={`${w} h-[22px] shrink-0 flex items-center justify-center ${box ? 'border border-[#3399ff] bg-[#f4f4f8]' : ''}`}>{children}</div>
);
const TbSep = () => <div className="w-px h-[20px] bg-[#c8c8d0] mx-[3px] shrink-0" />;
const ViewToolbar = () => (
  <div className="h-[26px] bg-[#eeeef2] flex items-center pl-[9px] text-[#1e1e1e] whitespace-nowrap">
    <Grip />
    <div className="w-[7px]" />
    <Tb><Mag c="#c8960c" /></Tb>
    <Tb><Mag dim /></Tb>
    <TbSep />
    <Tb box><Cube /></Tb>
    <Tb><Cube top="#aaa" left="#999" right="#888" size={14} /></Tb>
    <Tb><Svg><path d="M8 1L15 4.5V11.5L8 15L1 11.5V4.5Z" fill="#fff" stroke="#555" strokeDasharray="2 1" /><rect x="4" y="6" width="6" height="6" fill={GOLD} /></Svg></Tb>
    <div className="w-px h-[20px] bg-[#c8c8d0] ml-[3px] mr-[2px] shrink-0" />
    <Tb><Svg><rect x="1.5" y="1.5" width="6" height="6" fill="#fff" stroke="#999" /><rect x="7.5" y="8.5" width="6.5" height="6" fill="none" stroke="#555" /><path d="M10.7 8.5V14.5M7.5 11.5H14" stroke="#555" /></Svg></Tb>
    <div className="w-px h-[20px] bg-[#c8c8d0] ml-[2px] mr-[3px] shrink-0" />
    <Tb box w="w-[33px]"><Svg><path d="M13 6A6 6 0 1 0 14 9.5" fill="none" stroke="#555" strokeWidth="1.6" /><path d="M3 3A6 6 0 0 1 13 6" fill="none" stroke={GOLD} strokeWidth="1.6" /></Svg><Tri c="#888" className="ml-[3px]" /></Tb>
    <Tb><Svg><path d="M8 1L10.5 4H5.5ZM8 15L5.5 12H10.5ZM1 8L4 5.5V10.5ZM15 8L12 10.5V5.5Z" fill={GOLD} /><circle cx="8" cy="8" r="2.4" fill="#444" /></Svg></Tb>
    <Tb><Mag /></Tb>
    <Tb><Mag c="#c8a020" /></Tb>
    <Tb><Mag c="#5078b0" /></Tb>
    <Tb><Mag c="#40a070" /></Tb>
    <Tb><Mag c="#c8a060" /></Tb>
    <TbSep />
    <span className="ml-[3px] w-[26px]"><K>選択</K></span>
    <Svg className="ml-[1px]"><rect x="1" y="0" width="6" height="6" fill="#f00000" /><path d="M6 5L6 16L9 13L11 16L13 15L11 12L15 12Z" fill="#222" /></Svg>
    <span className="ml-[2px]"><K>モード</K></span><Tri c="#777" className="ml-[2px]" />
    <div className="w-[8px]" />
    <Tb><Svg><path d="M1 2H7V7H1ZM9 2H15V7H9ZM1 9H7V15H1ZM9 9H14" fill="none" stroke="#888" strokeDasharray="2 1" /></Svg></Tb>
    <Tb><Page /></Tb>
    <Tb><Page /></Tb>
    <Tb><Page /></Tb>
    <Tb><Cube top="#ccc" left="#bbb" right="#999" /></Tb>
    <Tb><GridBox /></Tb>
    <Tb><GridBox c="#208040" /></Tb>
    <Tb><GridBox dot="#10c010" /></Tb>
    <Tb><span className="text-[7px] text-[#aaa] tracking-normal">X.Y.Z</span></Tb>
    <Tb><Svg><rect x="1" y="2" width="14" height="6" fill="#fff" stroke="#333" /><path d="M3 5H13" stroke="#333" strokeDasharray="2 1" /><path d="M6 8L10 8L8 15Z" fill={GOLD} /></Svg></Tb>
    <Tb><Svg><path d="M2 2H14V11H8L5 15V11H2Z" fill="#ddd" stroke="#aaa" /></Svg></Tb>
    <TbSep />
    <Tb><Svg><path d="M1 11L5 7L9 9L14 3" fill="none" stroke={GOLD} strokeWidth="1.4" /><path d="M1 14H15" stroke="#555" /><circle cx="3" cy="14" r="1.5" fill={GOLD} /><circle cx="8" cy="14" r="1.5" fill={GOLD} /><circle cx="13" cy="14" r="1.5" fill={GOLD} /></Svg></Tb>
    <TbSep />
    <Svg className="ml-[3px]"><rect x="1" y="2" width="14" height="13" fill="#e8c050" stroke="#333" /><rect x="5" y="0.5" width="6" height="3" fill="#333" /></Svg>
    <span className="ml-[3px]"><K>クリップボード</K></span><Tri c="#777" className="ml-[2px]" />
    <span className="ml-[15px] tracking-normal">[ 空 ]</span>
    <TbSep />
    <Svg className="ml-[3px]"><path d="M8 1L15 4.5V11.5L8 15L1 11.5V4.5Z" fill="#e8e8e8" stroke="#555" /><path d="M1 4.5L8 8V15L1 11.5Z" fill="#20c020" /></Svg>
    <span className="ml-[2px]"><K>延長</K></span><Tri c="#777" className="ml-px" />
    <Svg className="ml-[13px]"><path d="M8 1A3.5 3.5 0 0 1 8 9A3.5 3.5 0 0 1 8 1ZM8 9L8 13" fill={GOLD} stroke={GOLD} /><path d="M1 15H15" stroke="#444" /></Svg>
    <span className="ml-[4px]"><K>選択条件</K></span><Tri c="#777" className="ml-[2px]" />
    <Svg className="ml-[18px]"><path d="M0 9H4" stroke="#888" /><rect x="4" y="3" width="10" height="10" fill="#10d010" stroke="#222" /></Svg>
    <span className="ml-px"><K>変換</K></span><Tri c="#777" className="ml-px" />
    <Tri c="#222" className="ml-[11px] mt-[6px]" />
  </div>
);

// ---------- 3D viewport ----------
const bandColors = (i) => {
  if (i < 2) return '#b88a00';
  if (i < 5) return '#c0c000';
  if (i < 7) return '#94b800';
  if (i < 10) return '#00b000';
  if (i < 13) return '#00b08c';
  if (i < 17) return '#00b0b0';
  if (i < 24) return '#0080b8';
  if (i < 27) return '#00b0b0';
  return '#00b08c';
};
const cells = (() => {
  const out = [];
  const A = [999.3, 387.3];
  const N = 24;
  const pt = (t, s) => [A[0] + 138.5 * t + 7.4 * s, A[1] + 138.4 * t - 7.4 * s];
  for (let i = 0; i < N; i++) {
    const c = bandColors(Math.floor((i * 30) / N));
    for (let j = 0; j < 2; j++) {
      const p = [pt(i / N, j / 2), pt((i + 1) / N, j / 2), pt((i + 1) / N, (j + 1) / 2), pt(i / N, (j + 1) / 2)];
      out.push({ p, c });
      out.push({ p: p.map(([x, y]) => [2312 - x, y]), c });
    }
  }
  const arc = (a, r) => [1156 + r * Math.sin(a), 507.5 + r * Math.cos(a)];
  const radii = [25.8, 20.6, 15.4];
  const M = 5;
  for (let i = 0; i < M; i++) {
    const a0 = -Math.PI / 4 + (i * Math.PI) / 2 / M;
    const a1 = -Math.PI / 4 + ((i + 1) * Math.PI) / 2 / M;
    for (let j = 0; j < 2; j++) {
      out.push({ p: [arc(a0, radii[j]), arc(a1, radii[j]), arc(a1, radii[j + 1]), arc(a0, radii[j + 1])], c: i === 0 || i === 4 ? '#00b060' : '#00b000' });
    }
  }
  return out;
})();
const Star = ({ x, y, c }) => (
  <g stroke={c} strokeWidth="1.4" opacity="0.85">
    <path d={`M${x - 10} ${y}H${x + 10}M${x} ${y - 10}V${y + 10}M${x - 6} ${y - 6}L${x + 6} ${y + 6}M${x + 6} ${y - 6}L${x - 6} ${y + 6}`} />
    <circle cx={x} cy={y} r="1.5" fill={c} />
  </g>
);
const legend = ['#ff0000', '#ffb400', '#ffff00', '#b4ff00', '#00ff00', '#00ffb4', '#00ffff', '#00b4ff', '#0000ff'];
const legendLabels = [['18 最大', true], ['16'], ['14'], ['12'], ['10'], ['8'], ['6'], ['4'], ['2'], ['0 最小', true]];

const Viewport = () => (
  <div className="relative h-[570px] overflow-hidden bg-[linear-gradient(#6b8cdc,#ffffff)]">
    <svg width="1528" height="570" viewBox="392 163 1528 570" className="absolute inset-0">
      <path d="M875.5 473H1073Q1083 473 1090 478L1156 543.3L1222 478Q1229 473 1239 473H1436V648H875.5Z" fill="#939393" stroke="#d4d8e0" strokeWidth="1" />
      <path d="M1015 388.3L1030 373.3L1145 488.3Q1156 500 1167 488.3L1282 373.3L1297 388.3L1166.9 518.4A15.4 15.4 0 0 1 1145.1 518.4Z" fill="#829a78" stroke="#c4dcb8" strokeWidth="1" />
      {cells.map((c, i) => (
        <polygon key={i} points={c.p.map((q) => q.join(',')).join(' ')} fill={c.c} stroke="#0a1812" strokeWidth="1" />
      ))}
      <Star x={1156} y={447.5} c="#ff2040" />
      <Star x={1156} y={564.5} c="#3030e0" />
      <defs>
        <radialGradient id="cy" cx="0.4" cy="0.35"><stop offset="0" stopColor="#30f0f0" /><stop offset="1" stopColor="#0a8088" /></radialGradient>
        <radialGradient id="bl" cx="0.4" cy="0.35"><stop offset="0" stopColor="#1818f0" /><stop offset="1" stopColor="#000060" /></radialGradient>
      </defs>
      <rect x="1813" y="577" width="5" height="60" fill="#0a7a0a" />
      <path d="M1815 557L1823 577H1807Z" fill="#0a800a" />
      <rect x="1815" y="634" width="62" height="5" fill="#b00000" />
      <path d="M1896 637L1876 629V645Z" fill="#d80000" />
      <circle cx="1815" cy="637" r="8" fill="url(#bl)" />
      <circle cx="1853" cy="600" r="8" fill="url(#cy)" />
    </svg>
    <div className="absolute left-[15px] top-[15px] text-[#111] text-[12.5px] leading-[15px] tracking-[-0.5px] whitespace-nowrap">
      <div><K big>A: 静的構造</K></div><div><K big>全変形量</K></div><div><K big>タイプ: 全変形量</K></div><div><K big>単位: mm</K></div><div><K big>時間: 1 s</K></div>
    </div>
    <div className="absolute left-[15px] top-[110px] w-[16px] h-[153px] flex flex-col border-y-2 border-x border-[#222] bg-[#222] gap-px">
      {legend.map((c) => <div key={c} className="flex-1" style={{ backgroundColor: c }} />)}
    </div>
    <div className="absolute left-[39px] top-[102px] text-[#111] text-[12.5px] tracking-[0px]">
      {legendLabels.map(([t, b]) => <div key={t} className={`h-[16.7px] leading-[16.7px] whitespace-nowrap ${b ? 'font-bold' : ''}`}>{t}</div>)}
    </div>
    <div className="absolute right-[8px] top-[14px] text-white text-right font-['Inter',sans-serif] font-bold">
      <div className="text-[37px] leading-[46px] tracking-[-0.5px]">Ansys</div>
      <div className="text-[18px] leading-[17px] tracking-[-0.6px]">2023 R1</div>
    </div>
    <div className="absolute left-[1423px] top-[369px] text-[#10a010] text-[12px] tracking-normal">Y</div>
    <div className="absolute left-[1516px] top-[464px] text-[#e00000] text-[12px] tracking-normal">X</div>
    <div className="absolute left-[517px] top-[509px] w-[493px] text-[#111]">
      <div className="h-[15px] relative">
        <span className="absolute -left-[10px]">0.00</span><span className="absolute left-[233px]">35.00</span><span className="absolute left-[480px] whitespace-nowrap">70.00 (mm)</span>
      </div>
      <div className="h-[11px] flex border border-[#555] bg-white">
        <div className="w-1/4 bg-black" /><div className="w-1/4 bg-[#f4f6fc]" /><div className="w-1/4 bg-black" /><div className="w-1/4 bg-[#f4f6fc]" />
      </div>
      <div className="relative h-[15px] mt-[3px]">
        <span className="absolute left-[110px]">17.50</span><span className="absolute left-[357px]">52.50</span>
      </div>
    </div>
  </div>
);

// ---------- graph ----------
const tVals = [0.05, 0.1, 0.175, 0.275, 0.375, 0.475, 0.525, 0.575, 0.58375, 0.5925, 0.60563, 0.62531, 0.645, 0.66469, 0.68, 0.7, 0.72, 0.735, 0.75, 0.775, 0.79, 0.8, 0.82, 0.84, 0.855, 0.87, 0.89, 0.91, 0.925, 0.94, 0.96, 1];
const avg = (t) => {
  const tab = [[0.05, 0.079], [0.1, 0.158], [0.175, 0.277], [0.275, 0.436], [0.375, 0.594], [0.475, 0.752], [0.525, 0.895], [0.575, 1.516], [0.58375, 1.623], [0.5925, 1.731], [0.60563, 1.9], [0.62531, 2.159], [0.645, 2.419], [0.66469, 2.689], [0.96, 7.2], [1, 7.35]];
  for (let i = 1; i < tab.length; i++) {
    if (t <= tab[i][0]) {
      const [a, b] = [tab[i - 1], tab[i]];
      return a[1] + ((b[1] - a[1]) * (t - a[0])) / (b[0] - a[0]);
    }
  }
  return 7.35;
};
const X = (t) => 71 + 666.6 * t;
const Y = (v) => 135 - (111 * v) / 18;
const xTicks = [['0.', 0, -2], ['0.125', 0.125, -2], ['0.25', 0.25, -2], ['0.375', 0.375, -2], ['0.5', 0.5, -2], ['0.625', 0.625, -2], ['0.75', 0.75, -2], ['0.875', 0.875, -2], ['1.', 1, -4]];
const yTicks = [['18.', 18], ['15.', 15], ['10.', 10], ['5.', 5], ['0.', 0]];
const Series = ({ f, c, ts = tVals }) => (
  <g>
    <polyline points={ts.map((t) => `${X(t)},${Y(f(t))}`).join(' ')} fill="none" stroke={c} strokeWidth="1.2" />
    {ts.map((t) => <rect key={t} x={X(t) - 1.5} y={Y(f(t)) - 1.5} width="3" height="3" fill={c} />)}
  </g>
);
const Chart = () => (
  <svg width="762" height="190" viewBox="0 0 762 190" className="block shrink-0" fill="#333">
    <path d="M62 24H738M62 135H738" stroke="#a0a0a0" />
    <path d="M71 24V146" stroke="#a0a0a0" />
    {yTicks.map(([l, v]) => <g key={l}><path d={`M66 ${Y(v)}H71`} stroke="#a0a0a0" /><text x="62" y={Y(v) + 6} textAnchor="end">{l}</text></g>)}
    {xTicks.map(([l, t, d]) => <g key={l}><path d={`M${X(t)} 135V146`} stroke="#a0a0a0" /><text x={X(t) + d} y="156">{l}</text></g>)}
    <text x="0" y="0" transform="translate(35 78) rotate(-90)" textAnchor="middle" fontWeight="bold" fill="#222" fontSize="12" letterSpacing="0">[mm]</text>
    <text x="405" y="181" fontSize="13" textAnchor="middle">[s]</text>
    <text x="733" y="14" fill="#222">1.</text>
    <Series f={avg} c="#0000cc" />
    <Series f={(t) => 18 * t} c="#008000" />
    <Series f={() => 0} c="#cc0000" ts={tVals.slice(1)} />
    <rect x="736.5" y="18" width="2.6" height="117" fill="#000" />
  </svg>
);
const GraphPanel = () => (
  <div className="w-[764px] flex flex-col border-l border-[#cccedb]">
    <PanelHead title="グラフ" className="border-t border-[#cccedb]" />
    <div className="h-[27px] bg-[#eeeef2] flex items-center text-[#1e1e1e] whitespace-nowrap shrink-0">
      <Grip className="ml-[10px]" />
      <span className="ml-[9px] w-[64px]"><K>アニメーション</K></span>
      <Svg className="ml-[4px]"><path d="M3 2V14" stroke="#999" strokeWidth="2" /><path d="M14 2L6 8L14 14Z" fill="#aaa" /></Svg>
      <Svg className="ml-[5px]"><path d="M3 1L14 8L3 15Z" fill={GOLD} /></Svg>
      <div className="ml-[3px]"><Tb box><div className="w-[12px] h-[14px] bg-[#c8960c] border border-[#555]" /></Tb></div>
      <Svg className="ml-[2px]"><path d="M13 2V14" stroke="#777" strokeWidth="2" /><path d="M2 2L10 8L2 14Z" fill="#aaa" /></Svg>
      <div className="w-px h-[20px] bg-[#c8c8d0] ml-[6px] mr-[4px]" />
      <Tb box><Svg><rect x="3" y="1" width="10" height="11" fill="none" stroke="#20a020" /><path d="M6.5 1V12M9.5 1V12" stroke="#20a020" /><path d="M2 15H14" stroke="#f00000" strokeDasharray="2 1" /></Svg></Tb>
      <Tb><Svg><rect x="3" y="1" width="10" height="11" fill="none" stroke="#2060d0" /><path d="M6.5 1V12M9.5 1V12" stroke="#2060d0" /><path d="M2 15H14" stroke="#f00000" strokeDasharray="2 1" /></Svg></Tb>
      <div className="w-px h-[20px] bg-[#c8c8d0] mr-[4px] ml-[2px]" />
      <div className="w-[99px] h-[23px] bg-white border border-[#cccedb] flex items-center pl-[3px] pr-[5px]"><span className="flex-1"><K>20 フレーム</K></span><Tri /></div>
      <div className="w-[100px] h-[23px] bg-white border border-[#cccedb] flex items-center pl-[3px] pr-[5px]"><span className="flex-1"><K>2 Sec (自動)</K></span><Tri /></div>
      <div className="w-px h-[20px] bg-[#c8c8d0] ml-[3px] mr-[3px]" />
      <Svg><rect x="1" y="2" width="14" height="12" fill="#fff" stroke="#333" /><path d="M1 5H15" stroke="#333" strokeWidth="2" strokeDasharray="2 1" /><path d="M5 12A3 3 0 0 1 11 9" fill="none" stroke="#e02020" strokeWidth="1.4" /><rect x="9" y="10" width="5" height="5" fill="#4a90d0" /></Svg>
      <div className="w-px h-[20px] bg-[#c8c8d0] ml-[6px] mr-[6px]" />
      <Mag dim />
      <div className="ml-[6px] w-[15px] flex flex-col gap-px">
        <div className="h-[4px] bg-[repeating-linear-gradient(90deg,#f00000_0_2px,transparent_2px_3px)]" />
        <div className="h-[4px] bg-[repeating-linear-gradient(90deg,#00d000_0_2px,transparent_2px_3px)]" />
        <div className="h-[4px] bg-[repeating-linear-gradient(90deg,#0000f0_0_2px,transparent_2px_3px)]" />
      </div>
      <Svg className="ml-[7px]"><path d="M3 14L7 4L10 9L14 3M2 8H10" fill="none" stroke="#b0b0b0" strokeWidth="1.3" /></Svg>
      <Svg className="ml-[6px]"><path d="M2 10L10 2L14 6L6 14Z" fill={GOLD} stroke="#444" /><path d="M2 14H6" stroke="#444" /></Svg>
      <div className="w-px h-[20px] bg-[#c8c8d0] ml-[4px] mr-[7px]" />
      <Svg><rect x="1" y="3" width="14" height="10" fill="#c8c8c8" stroke="#888" /><path d="M1 6H15M1 10H15" stroke="#fff" strokeDasharray="2 1" /></Svg>
      <Svg className="ml-[6px]"><rect x="1" y="2" width="14" height="9" fill="#c8c8c8" stroke="#888" /><path d="M1 5H15M1 8H15" stroke="#fff" strokeDasharray="2 1" /><path d="M10 12H14V15H10Z" fill="#bbb" /></Svg>
      <div className="w-px h-[20px] bg-[#c8c8d0] ml-[5px] mr-[6px]" />
      <Svg><path d="M2 2V14M2 9H5L6 5L8 12L10 7L11 9H15" fill="none" stroke="#b0b0b0" /></Svg>
      <div className="ml-[5px] w-[58px] h-[22px] border border-[#cccedb] bg-[#eeeef2] text-[#a2a4a5] flex items-center pl-[2px]">3 Cycles</div>
      <span className="ml-[5px] font-bold text-[#333] tracking-normal">SA</span>
      <Tri c="#222" className="ml-[5px] mt-[6px]" />
    </div>
    <div className="flex-1 bg-white flex flex-col min-h-0">
      <Chart />
      <div className="ml-[71px] w-[668px] h-[14px] bg-[#f0f0f0] border border-[#a0a0a0] text-[#333] flex items-center justify-center">1</div>
    </div>
    <div className="h-[19px] bg-[#eeeef2] flex items-stretch border-t border-[#cccedb] shrink-0 text-[#444] whitespace-nowrap">
      <span className="ml-[5px] w-[60px] flex items-center"><span><K>選択情報</K></span></span>
      <span className="w-[50px] flex items-center"><span><K>メッセージ</K></span></span>
      <span className="w-[37px] bg-white border-x border-[#cccedb] text-[#0e70c0] flex items-center justify-center -mt-px"><span><K>グラフ</K></span></span>
    </div>
  </div>
);

// ---------- table ----------
const tableRows = [
  ['5.e-002', '0.9', '7.9188e-002'], ['0.1', '1.8', '0.15838'], ['0.175', '3.15', '0.27716'], ['0.275', '4.95', '0.43553'],
  ['0.375', '6.75', '0.59391'], ['0.475', '8.55', '0.75228'], ['0.525', '9.45', '0.8949'], ['0.575', '10.35', '1.5155'],
  ['0.58375', '10.507', '1.6231'], ['0.5925', '10.665', '1.7311'], ['0.60563', '10.901', '1.9006'], ['0.62531', '11.256', '2.1589'],
  ['0.645', '11.61', '2.4193'], ['0.66469', '11.964', '2.6885'], ['0.67845', '12.21', '2.8877'],
];
const cw = ['w-[21px]', 'w-[48px]', 'w-[88px]', 'w-[88px]', 'w-[77px]'];
const HeadCheck = () => (
  <div className="w-[14px] h-[14px] bg-white border border-[#888] flex items-center justify-center shrink-0">
    <Svg w={9} h={9}><path d="M1 4.5L3.5 8L8 1" fill="none" stroke="#000" strokeWidth="1.8" /></Svg>
  </div>
);
const TableRow = ({ r, i }) => (
  <div className={`flex text-[#222] shrink-0 ${i < 4 ? 'h-[15px]' : 'h-[18px]'}`}>
    <div className={`${cw[0]} bg-[#eeeef2] border-b border-r border-[#888] pl-[2px] flex items-center pt-px`}>{i + 1}</div>
    <div className={`${cw[1]} bg-[#e6e5e1] border-b border-r border-[#a8a8a8] pl-[3px] flex items-center pt-px`}>{r[0]}</div>
    <div className={`${cw[2]} bg-[#e6e5e1] border-b border-r border-[#a8a8a8] pl-[3px] flex items-center pt-px`}>0.</div>
    <div className={`${cw[3]} bg-[#e6e5e1] border-b border-r border-[#a8a8a8] pl-[3px] flex items-center pt-px`}>{r[1]}</div>
    <div className={`${cw[4]} bg-[#e6e5e1] border-b border-r border-[#a8a8a8] pl-[3px] flex items-center pt-px`}>{r[2]}</div>
  </div>
);
const TablePanel = () => (
  <div className="flex-1 flex flex-col min-w-0">
    <PanelHead title="テーブルデータ" className="border-t border-l border-[#cccedb]" />
    <div className="flex-1 flex min-h-0">
      <div className="flex-1 bg-[#a0a0a0] flex flex-col overflow-hidden min-w-0">
        <div className="flex h-[17px] bg-[#eeeef2] shrink-0 w-[322px] whitespace-nowrap">
          <div className={`${cw[0]} border-b border-r border-[#666]`} />
          <div className={`${cw[1]} border-b border-r border-[#666] pl-[3px] flex items-center bg-white`}><span><K>時間 [s]</K></span></div>
          <div className={`${cw[2]} border-b border-r border-[#666] pl-[2px] flex items-center gap-[7px] bg-white text-[#d02020]`}><HeadCheck /><span><K>最小値 [mm]</K></span></div>
          <div className={`${cw[3]} border-b border-r border-[#666] pl-[2px] flex items-center gap-[7px] bg-white text-[#10a010]`}><HeadCheck /><span><K>最大値 [mm]</K></span></div>
          <div className={`${cw[4]} border-b border-r border-[#666] pl-[2px] flex items-center gap-[7px] bg-white text-[#2020d0]`}><HeadCheck /><span><K>平均 [mm]</K></span></div>
        </div>
        {tableRows.map((r, i) => <TableRow key={i} r={r} i={i} />)}
      </div>
      <div className="w-[17px] bg-[#f0f0f2] flex flex-col items-center shrink-0">
        <Svg w={9} h={6} className="mt-[6px]"><path d="M1 5L4.5 1.5L8 5" fill="none" stroke="#555" strokeWidth="1.5" /></Svg>
        <div className="w-[15px] h-[99px] bg-[#c2c3c9] mt-[5px]" />
        <div className="flex-1" />
        <Svg w={9} h={6} className="mb-[6px]"><path d="M1 1L4.5 4.5L8 1" fill="none" stroke="#555" strokeWidth="1.5" /></Svg>
      </div>
    </div>
  </div>
);

// ---------- status bar ----------
const StatusBar = () => (
  <div className="h-[21px] bg-[#007acc] text-white flex items-center shrink-0 whitespace-nowrap border-b border-[#1a3a5a] text-[12.5px] tracking-[-0.4px]">
    <span className="ml-[9px] w-[24px]"><K big>準備</K></span>
    <div className="ml-[1335px] w-[89px] flex items-center">
      <Svg w={15} h={16}><path d="M1 2H13V11H7L4 15V11H1Z" fill="#f0c020" /><circle cx="8" cy="5" r="5" fill="#1a40c0" /><text x="6.4" y="8.5" fontSize="9" fontWeight="bold" fill="#fff">i</text></Svg>
      <span className="ml-[3px]"><K big>5 メッセージ</K></span>
    </div>
    <span className="w-[63px]"><K big>選択なし</K></span>
    <Svg w={9} h={6} className="mr-[2px]"><path d="M0 6L4.5 0L9 6Z" fill="#fff" /></Svg>
    <span className="w-[168px]"><K big>メートル (mm, kg, N, s, mV, mA)</K></span>
    <span className="w-[48px]"><K big>ラジアン</K></span>
    <span className="w-[139px]"><K big>RPM (毎分当りの回転数)</K></span>
    <span><K big>摂氏</K></span>
  </div>
);

export default function App() {
  return (
    <div className="w-[1920px] h-[1041px] flex flex-col overflow-hidden bg-[#eeeef2] text-[11.5px] tracking-[-0.9px] leading-[14px] [font-feature-settings:'palt'] font-['Noto_Sans_CJK_JP',sans-serif]">
      <TitleBar />
      <TabRow />
      <Ribbon />
      <div className="flex-1 flex min-h-0">
        <div className="w-[388px] shrink-0 flex flex-col">
          <Outline />
          <Details />
        </div>
        <div className="w-[4px] shrink-0" />
        <div className="flex-1 flex flex-col min-w-0">
          <ViewToolbar />
          <Viewport />
          <div className="h-[3px] shrink-0" />
          <div className="flex-1 flex min-h-0">
            <GraphPanel />
            <TablePanel />
          </div>
        </div>
      </div>
      <StatusBar />
    </div>
  );
}
